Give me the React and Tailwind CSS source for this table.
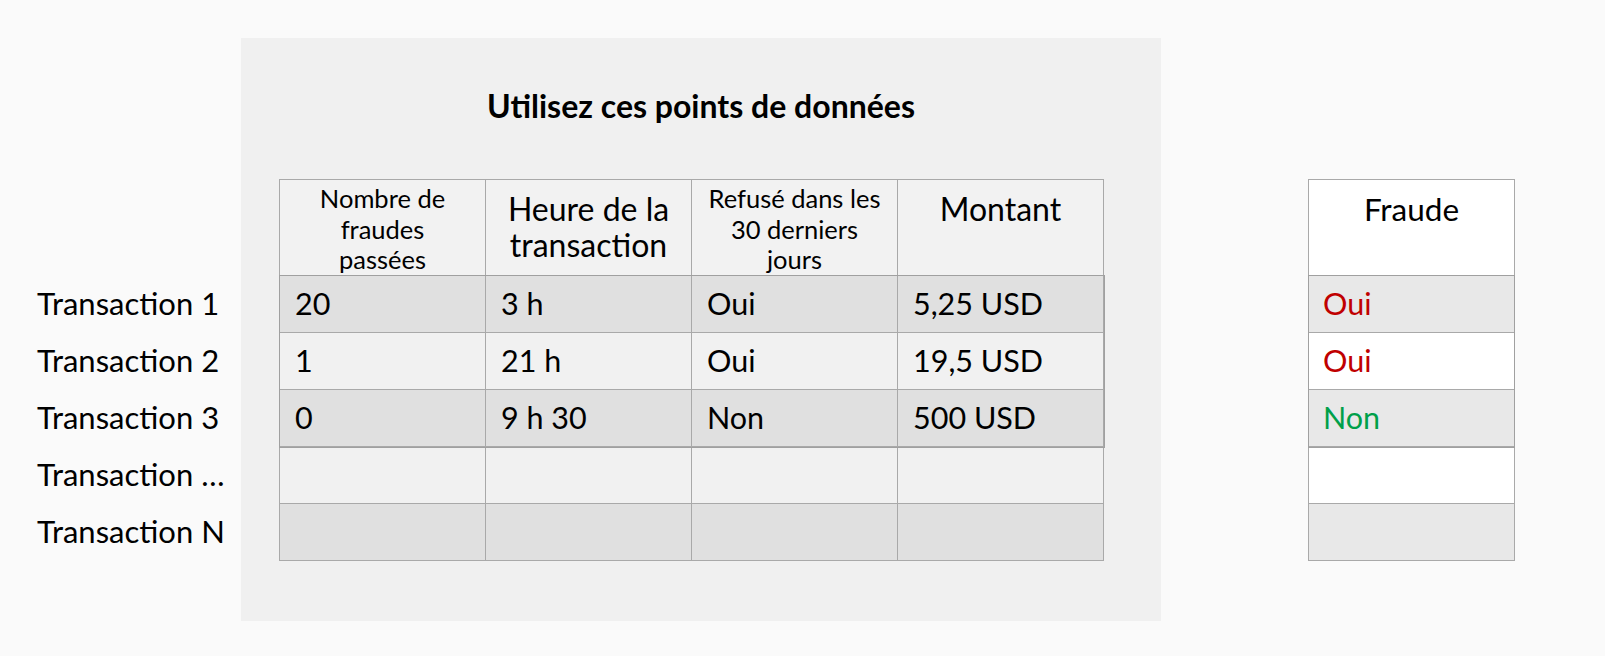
import React from 'react';

const headers = [
  { lines: ['Nombre de', 'fraudes', 'passées'], small: true },
  { lines: ['Heure de la', 'transaction'], small: false },
  { lines: ['Refusé dans les', '30 derniers', 'jours'], small: true },
  { lines: ['Montant'], small: false },
];

const rows = [
  ['20', '3 h', 'Oui', '5,25 USD'],
  ['1', '21 h', 'Oui', '19,5 USD'],
  ['0', '9 h 30', 'Non', '500 USD'],
  ['', '', '', ''],
  ['', '', '', ''],
];

const labels = ['Transaction 1', 'Transaction 2', 'Transaction 3', 'Transaction …', 'Transaction N'];

const fraud = [
  { text: 'Oui', color: 'text-[#c00000]' },
  { text: 'Oui', color: 'text-[#c00000]' },
  { text: 'Non', color: 'text-[#00a04a]' },
  { text: '', color: '' },
  { text: '', color: '' },
];

const DataRow = ({ cells, shaded }) => (
  <div className={`flex h-[57px] ${shaded ? 'bg-[#e0e0e0]' : 'bg-[#f1f1f1]'}`}>
    {cells.map((c, i) => (
      <div
        key={i}
        className="w-[206px] flex items-center pl-[15px] border-r border-b border-[#a9a9a9] text-[30.5px]"
      >
        {c}
      </div>
    ))}
  </div>
);

const FraudRow = ({ item, shaded }) => (
  <div
    className={`flex items-center h-[57px] pl-[14px] border-b border-[#a9a9a9] text-[30.5px] ${
      shaded ? 'bg-[#e8e8e8]' : 'bg-white'
    } ${item.color}`}
  >
    {item.text}
  </div>
);

const App = () => {
  return (
    <div
      className="w-[1605px] h-[656px] bg-[#fafafa] text-black flex pt-[38px] overflow-hidden"
      style={{ fontFamily: 'Lato, "Open Sans", sans-serif' }}
    >
      {/* row labels */}
      <div className="w-[241px] pt-[237px] pl-[37px]">
        {labels.map((l) => (
          <div key={l} className="h-[57px] flex items-center text-[31px] whitespace-nowrap">
            {l}
          </div>
        ))}
      </div>

      {/* data panel */}
      <div className="w-[920px] h-[583px] bg-[#f0f0f0] flex flex-col">
        <h1 className="mt-[49px] h-[38px] leading-[38px] text-[32px] font-bold text-center">
          Utilisez ces points de données
        </h1>
        <div className="mt-[54px] ml-[38px] w-[825px] border-l border-t border-[#a9a9a9]">
          <div className="flex h-[96px] bg-[#f2f2f2]">
            {headers.map((h, i) => (
              <div
                key={i}
                className={`w-[206px] flex flex-col items-center border-r border-b border-[#a9a9a9] whitespace-nowrap ${
                  h.small ? 'pt-[3px] text-[25.5px] leading-[30.5px]' : 'pt-[11px] text-[32px] leading-[36px]'
                }`}
              >
                {h.lines.map((t) => (
                  <span key={t}>{t}</span>
                ))}
              </div>
            ))}
          </div>
          <div className="relative z-10 shadow-[0_0_0_1px_#a0a0a0]">
            {rows.slice(0, 3).map((r, i) => (
              <DataRow key={i} cells={r} shaded={i % 2 === 0} />
            ))}
          </div>
          {rows.slice(3).map((r, i) => (
            <DataRow key={i} cells={r} shaded={i === 1} />
          ))}
        </div>
      </div>

      {/* fraud column */}
      <div className="ml-[147px] mt-[141px] w-[207px] self-start border-l border-t border-r border-[#a9a9a9]">
        <div className="h-[96px] bg-white border-b border-[#a9a9a9] flex justify-center pt-[11px] text-[31.5px] leading-[36px]">
          Fraude
        </div>
        <div className="relative z-10 shadow-[0_0_0_1px_#a0a0a0]">
          {fraud.slice(0, 3).map((f, i) => (
            <FraudRow key={i} item={f} shaded={i % 2 === 0} />
          ))}
        </div>
        {fraud.slice(3).map((f, i) => (
          <FraudRow key={i} item={f} shaded={i === 1} />
        ))}
      </div>
    </div>
  );
};

export default App;
